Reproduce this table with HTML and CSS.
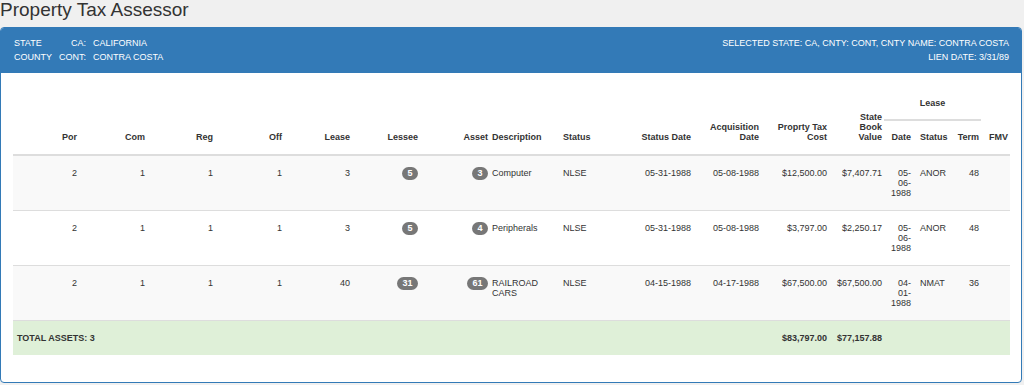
FILE: index.html
```html
<!DOCTYPE html>
<html lang="en">
<head>
<meta charset="utf-8">
<title>Property Tax Assessor</title>
<link rel="stylesheet" href="styles.css">
</head>
<body>
<h1 class="title">Property Tax Assessor</h1>
<div class="panel">
  <div class="panel-heading">
    <div class="loc">
      <span>STATE</span><span class="code">CA:</span><span>CALIFORNIA</span>
      <span>COUNTY</span><span class="code">CONT:</span><span>CONTRA COSTA</span>
    </div>
    <div class="sel">
      <div>SELECTED STATE: CA, CNTY: CONT, CNTY NAME: CONTRA COSTA</div>
      <div>LIEN DATE: 3/31/89</div>
    </div>
  </div>
  <div class="panel-body">
    <table class="assets">
      <colgroup>
        <col class="c66"><col class="c68"><col class="c68"><col class="c69"><col class="c68"><col class="c68">
        <col class="c70"><col class="c71"><col class="c66"><col class="c66"><col class="c68"><col class="c68">
        <col class="c55"><col class="c29"><col class="c40"><col class="c28"><col class="c29">
      </colgroup>
      <thead>
        <tr>
          <th rowspan="2" class="r">Por</th>
          <th rowspan="2" class="r">Com</th>
          <th rowspan="2" class="r">Reg</th>
          <th rowspan="2" class="r">Off</th>
          <th rowspan="2" class="r">Lease</th>
          <th rowspan="2" class="r">Lessee</th>
          <th rowspan="2" class="r">Asset</th>
          <th rowspan="2" class="l">Description</th>
          <th rowspan="2" class="l">Status</th>
          <th rowspan="2" class="r">Status Date</th>
          <th rowspan="2" class="r">Acquisition<br>Date</th>
          <th rowspan="2" class="r">Proprty Tax<br>Cost</th>
          <th rowspan="2" class="r">State<br>Book<br>Value</th>
          <th colspan="3" class="group">Lease</th>
          <th rowspan="2" class="r">FMV</th>
        </tr>
        <tr class="sub">
          <th class="r">Date</th>
          <th class="l ls">Status</th>
          <th class="r">Term</th>
        </tr>
      </thead>
      <tbody>
        <tr class="odd">
          <td class="r">2</td><td class="r">1</td><td class="r">1</td><td class="r">1</td><td class="r">3</td>
          <td class="r"><span class="badge">5</span></td>
          <td class="r"><span class="badge">3</span></td>
          <td>Computer</td><td>NLSE</td>
          <td class="r">05-31-1988</td><td class="r">05-08-1988</td>
          <td class="r">$12,500.00</td><td class="r">$7,407.71</td>
          <td class="r">05-<wbr>06-<wbr>1988</td><td class="ls">ANOR</td><td class="r">48</td><td></td>
        </tr>
        <tr>
          <td class="r">2</td><td class="r">1</td><td class="r">1</td><td class="r">1</td><td class="r">3</td>
          <td class="r"><span class="badge">5</span></td>
          <td class="r"><span class="badge">4</span></td>
          <td>Peripherals</td><td>NLSE</td>
          <td class="r">05-31-1988</td><td class="r">05-08-1988</td>
          <td class="r">$3,797.00</td><td class="r">$2,250.17</td>
          <td class="r">05-<wbr>06-<wbr>1988</td><td class="ls">ANOR</td><td class="r">48</td><td></td>
        </tr>
        <tr class="odd">
          <td class="r">2</td><td class="r">1</td><td class="r">1</td><td class="r">1</td><td class="r">40</td>
          <td class="r"><span class="badge">31</span></td>
          <td class="r"><span class="badge">61</span></td>
          <td>RAILROAD CARS</td><td>NLSE</td>
          <td class="r">04-15-1988</td><td class="r">04-17-1988</td>
          <td class="r">$67,500.00</td><td class="r">$67,500.00</td>
          <td class="r">04-<wbr>01-<wbr>1988</td><td class="ls">NMAT</td><td class="r">36</td><td></td>
        </tr>
        <tr class="total">
          <td colspan="11" class="total-label">TOTAL ASSETS: 3</td>
          <td class="r">$83,797.00</td><td class="r">$77,157.88</td>
          <td></td><td></td><td></td><td></td>
        </tr>
      </tbody>
    </table>
  </div>
</div>
</body>
</html>
```
FILE: styles.css
```css
html, body {
  margin: 0;
  padding: 0;
}
body {
  background: #f0f0f0;
  font-family: "Liberation Sans", Arial, sans-serif;
  color: #333;
  width: 1024px;
  height: 385px;
  overflow: hidden;
}
.title {
  margin: 0;
  font-size: 19px;
  line-height: 20px;
  font-weight: normal;
  color: #333;
}
.panel {
  margin-top: 7px;
  width: 1022px;
  box-sizing: border-box;
  border: 1px solid #337ab7;
  border-radius: 4px;
  background: #fff;
}
.panel-heading {
  background: #337ab7;
  color: #fff;
  display: flex;
  justify-content: space-between;
  padding: 8px 12px 9px 13px;
  font-size: 9px;
  line-height: 14px;
  border-radius: 3px 3px 0 0;
}
.loc {
  display: grid;
  grid-template-columns: auto auto auto;
  column-gap: 7px;
  justify-content: start;
}
.loc .code {
  justify-self: end;
}
.sel {
  text-align: right;
}
.panel-body {
  padding: 13px 11px 27px 12px;
}
.assets {
  border-collapse: separate;
  border-spacing: 0;
  table-layout: fixed;
  width: 997px;
  font-size: 9px;
  line-height: 10px;
}
.c66 { width: 66px; }
.c68 { width: 68px; }
.c69 { width: 69px; }
.c70 { width: 70px; }
.c71 { width: 71px; }
.c55 { width: 55px; }
.c29 { width: 29px; }
.c40 { width: 40px; }
.c28 { width: 28px; }
.assets th,
.assets td {
  padding: 12px 2px;
  vertical-align: top;
  text-align: left;
}
.assets thead th {
  font-weight: bold;
  vertical-align: bottom;
  border-bottom: 2px solid #ddd;
}
.assets thead th.group {
  text-align: center;
  padding-bottom: 11px;
}
.assets thead .sub th {
  padding-top: 11px;
}
.assets .r {
  text-align: right;
}
.assets .l {
  text-align: left;
}
.assets .ls {
  padding-left: 7px;
}
.assets tbody tr + tr td {
  border-top: 1px solid #ddd;
}
.assets tbody tr.odd td {
  background: #f9f9f9;
}
.assets tbody tr.total td {
  background: #dff0d8;
  font-weight: bold;
}
.assets tbody tr.total td.total-label {
  padding-left: 4px;
}
.badge {
  display: inline-block;
  height: 13px;
  line-height: 13px;
  padding: 0 5.5px;
  border-radius: 7px;
  background: #777;
  color: #fff;
  font-weight: bold;
  font-size: 9px;
  vertical-align: top;
  margin-top: -1px;
}
```
